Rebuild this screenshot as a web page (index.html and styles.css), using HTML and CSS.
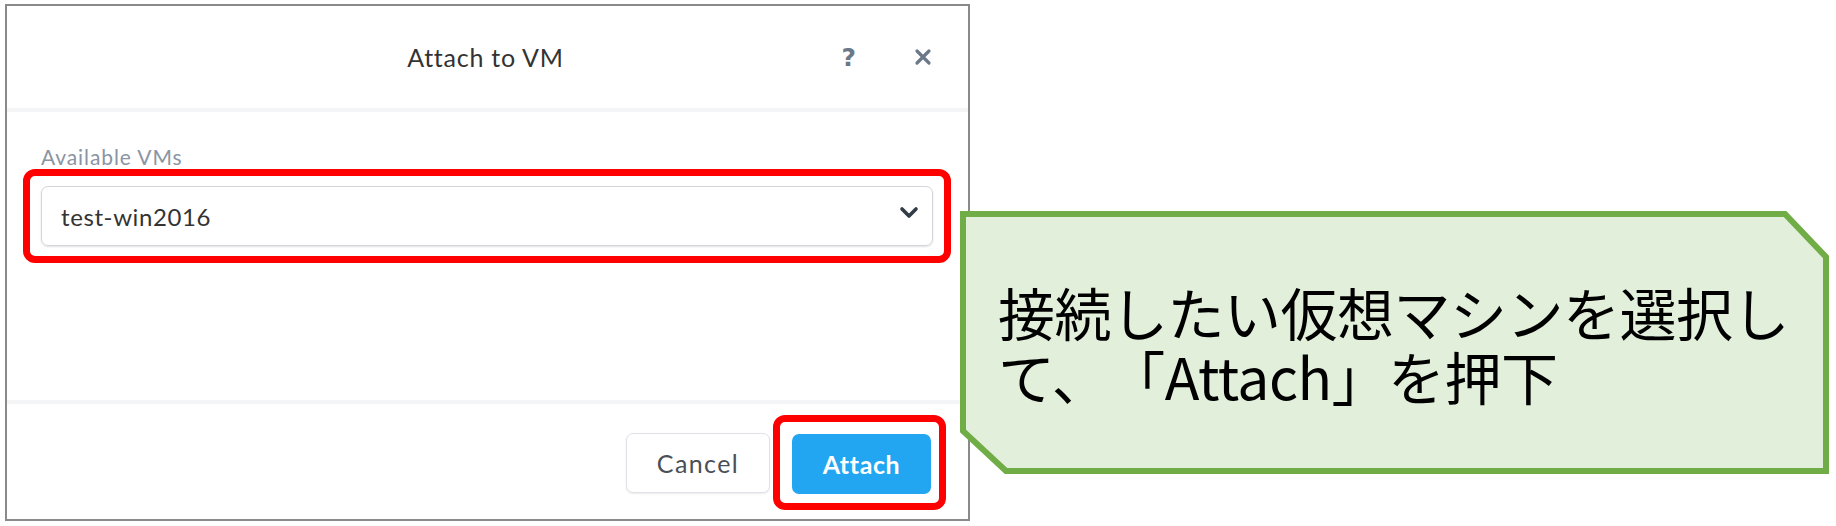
FILE: index.html
```html
<!DOCTYPE html>
<html lang="ja">
<head>
<meta charset="utf-8">
<title>Attach to VM</title>
<link rel="stylesheet" href="styles.css">
</head>
<body>
<div class="page">
  <div class="dialog">
    <div class="header">
      <div></div>
      <div class="title">Attach to VM</div>
      <div class="actions">
        <span class="help">?</span>
        <svg class="close" width="18" height="18" viewBox="0 0 18 18"><path d="M3 3 L15 15 M15 3 L3 15" stroke="#6b7888" stroke-width="3.2" stroke-linecap="round"/></svg>
      </div>
    </div>
    <div class="body">
      <div class="label">Available VMs</div>
      <div class="mark mark-select">
        <div class="select">
          <span>test-win2016</span>
          <svg class="chev" width="20" height="14" viewBox="0 0 20 14"><polyline points="3,3 10,10 17,3" fill="none" stroke="#333d47" stroke-width="3.6" stroke-linecap="round" stroke-linejoin="round"/></svg>
        </div>
      </div>
    </div>
    <div class="footer">
      <button class="btn btn-cancel">Cancel</button>
      <div class="mark mark-btn">
        <button class="btn btn-attach">Attach</button>
      </div>
    </div>
  </div>
  <div class="callout">
    <svg class="callout-shape" width="869" height="263" viewBox="0 0 869 263"><polygon points="3,3 825,3 866,46 866,260 46,260 3,220" fill="#e2efda" stroke="#70ad47" stroke-width="6" stroke-linejoin="miter"/></svg>
    <div class="callout-text">
      <div class="line">接続したい仮想マシンを選択し</div>
      <div class="line">て、「Attach」を押下</div>
    </div>
  </div>
</div>
</body>
</html>
```
FILE: styles.css
```css
html, body {
  margin: 0;
  padding: 0;
  background: #ffffff;
}
.page {
  position: relative;
  width: 1836px;
  height: 526px;
  padding: 4px 0 0 5px;
  box-sizing: border-box;
  font-family: Lato, "Open Sans", "Liberation Sans", sans-serif;
}
.dialog {
  width: 965px;
  height: 517px;
  box-sizing: border-box;
  border: 2px solid #8a8a8a;
  display: flex;
  flex-direction: column;
  background: #fff;
}
.header {
  height: 102px;
  display: grid;
  grid-template-columns: 1fr auto 1fr;
  align-items: center;
  border-bottom: 4px solid #f4f5f6;
}
.title {
  font-size: 25px;
  letter-spacing: 0.75px;
  color: #333;
  padding-right: 4px;
}
.actions {
  display: flex;
  justify-content: flex-end;
  align-items: center;
  gap: 58px;
  padding-right: 36px;
}
.help {
  font-family: "DejaVu Sans", sans-serif;
  font-size: 25px;
  font-weight: 700;
  color: #6b7888;
}
.body {
  flex: 1;
  padding: 35px 17px 0 16px;
}
.label {
  margin-left: 18px;
  font-size: 21px;
  letter-spacing: 0.9px;
  color: #8a94a3;
  line-height: 20px;
  margin-bottom: 2px;
}
.mark {
  border: 7px solid #ff0000;
  border-radius: 12px;
}
.mark-select {
  padding: 10px 11px;
}
.select {
  height: 60px;
  box-sizing: border-box;
  border: 1px solid #d2d6db;
  border-radius: 7px;
  box-shadow: 0 1px 2px rgba(0,0,0,0.12);
  display: flex;
  align-items: center;
  justify-content: space-between;
  padding: 0 13px 0 19px;
  font-size: 24px;
  letter-spacing: 0.6px;
  color: #333;
}
.chev {
  margin-top: -6px;
}
.footer {
  height: 113px;
  border-top: 4px solid #f4f5f6;
  display: flex;
  justify-content: flex-end;
  align-items: center;
  gap: 3px;
  padding-right: 22px;
  padding-top: 2px;
}
.btn {
  height: 60px;
  border-radius: 7px;
  font-family: inherit;
  font-size: 25px;
  cursor: pointer;
  padding: 0;
}
.btn-cancel {
  width: 144px;
  background: #fff;
  border: 1px solid #dfe2e6;
  color: #4a4f55;
  letter-spacing: 1.4px;
  box-shadow: 0 1px 2px rgba(0,0,0,0.08);
}
.mark-btn {
  padding: 12px 8px 9px 12px;
}
.btn-attach {
  width: 139px;
  display: block;
  background: #22a6f2;
  border: none;
  color: #fff;
  font-weight: 700;
  letter-spacing: 0.6px;
}
.callout {
  position: absolute;
  left: 960px;
  top: 211px;
  width: 869px;
  height: 263px;
}
.callout-shape {
  position: absolute;
  left: 0;
  top: 0;
}
.callout-text {
  position: relative;
  padding: 68px 0 0 38px;
  font-family: "Noto Sans CJK JP", sans-serif;
  font-size: 57px;
  color: #000;
  letter-spacing: -0.5px;
  text-spacing-trim: space-all;
}
.line {
  height: 64px;
  line-height: 64px;
  white-space: nowrap;
}
```
